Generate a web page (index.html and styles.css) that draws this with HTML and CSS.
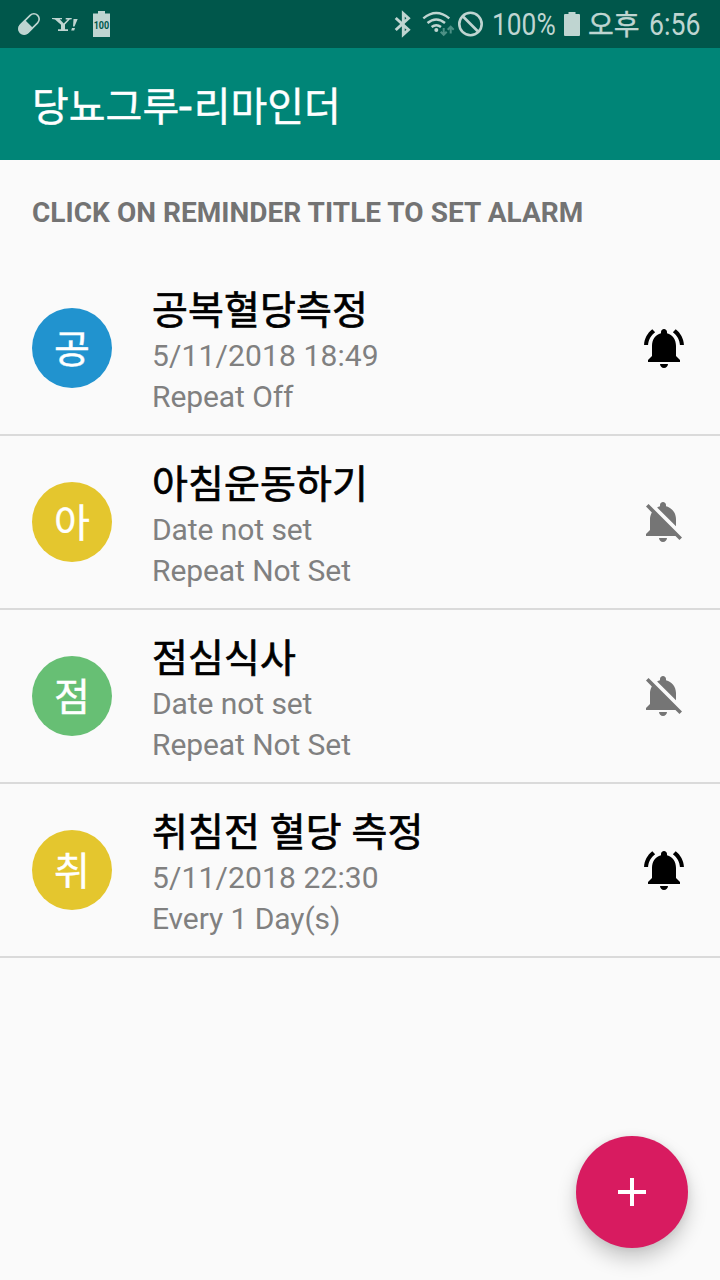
FILE: index.html
```html
<!DOCTYPE html>
<html lang="ko">
<head>
<meta charset="utf-8">
<title>당뇨그루-리마인더</title>
<link rel="stylesheet" href="styles.css">
</head>
<body>
<div class="status">
  <svg class="status-icons" width="180" height="48" viewBox="0 0 180 48">
    <g transform="rotate(-45 29 24)" fill="none" stroke="#bfd5d1" stroke-width="1.6">
      <rect x="16.800" y="18.700" width="24.400" height="10.600" rx="5.300"/>
      <path d="M29 18v12h-6.500a6 6 0 0 1 0-12z" fill="#bfd5d1" stroke="none"/>
    </g>
    <path fill="#bfd5d1" d="M52 18h10v1.200h-2.300l4 4.300 4-4h-2V18h6v1.200l-2 .4-4.700 5v4.700h3V31H58v-1.700h3v-4.500l-6-5.400-3-.3zM73.500 19h4.200l-3.200 7.500h-1.500zM72 28h3l-.8 2.500h-3z"/>
    <path fill="#bfd5d1" d="M93 13.500h5V11h7v2.500h5V37H93z"/>
    <text class="badge-text" x="93.700" y="29" textLength="15.500" lengthAdjust="spacingAndGlyphs">100</text>
  </svg>
  <div class="status-right">
    <svg width="104" height="48" viewBox="384 0 104 48" fill="none" stroke="#bfd5d1">
      <path stroke-width="2.900" d="M395.700 18l12.800 11.800-5.200 4.700V13.500l5.200 4.700-12.800 11.800"/>
      <g stroke-width="2.400"><path d="M423.300 18.400q13-10.600 26 0M427.500 23q8.700-7.200 17.500 0M431.600 27q4.700-3.700 9.400 0"/></g>
      <circle cx="436.300" cy="30" r="2" fill="#bfd5d1" stroke="none"/>
      <path stroke="#4d9186" stroke-width="2" d="M443.700 28v7m-3-3.200l3 3 3-3M450.700 33.500v-7m-3 3.200l3-3 3 3"/>
      <circle cx="470.500" cy="24" r="11.200" stroke-width="2.600"/><path stroke-width="2.600" d="M462.500 16l16 16"/>
    </svg>
    <span class="status-text percent">100%</span>
    <svg class="battery" width="17" height="24" viewBox="0 0 17 24"><path fill="#bfd5d1" d="M1 2h3.500V0h7v2H15q1 0 1 1v20q0 1-1 1H1q-1 0-1-1V3q0-1 1-1z"/></svg>
    <span class="status-text ampm">오후</span>
    <span class="status-text clock">6:56</span>
  </div>
</div>
<header class="appbar"><h1>당뇨그루<span class="dash">-</span>리마인더</h1></header>
<h2 class="hint">CLICK ON REMINDER TITLE TO SET ALARM</h2>
<svg class="defs" width="0" height="0">
  <symbol id="bell" viewBox="0 0 24 24"><path d="M7.580 4.080L6.150 2.650C3.750 4.480 2.170 7.300 2.030 10.500h2c.15-2.650 1.510-4.970 3.550-6.420zM19.970 10.500h2c-.15-3.200-1.730-6.020-4.120-7.850l-1.420 1.430c2.020 1.450 3.390 3.770 3.540 6.420zM18 11c0-3.070-1.640-5.640-4.500-6.320V4c0-.83-.67-1.500-1.500-1.500s-1.500.67-1.500 1.500v.68C7.640 5.360 6 7.920 6 11v5l-2 2v1h16v-1l-2-2zM12 22c1.100 0 2-.9 2-2h-4c0 1.100.9 2 2 2z"/></symbol>
  <symbol id="bell-off" viewBox="0 0 24 24"><path d="M11.500 22c1.100 0 2-.9 2-2h-4c0 1.100.9 2 2 2zM18 10.500c0-3.070-2.130-5.640-5-6.320V3.500c0-.83-.67-1.500-1.500-1.500S10 2.670 10 3.500v.68c-.51.12-.99.32-1.450.56L18 14.180V10.500zm-.27 8.500l2 2L21 19.730 4.270 3 3 4.270l2.920 2.920C5.340 8.160 5 9.290 5 10.500V16l-2 2v1h14.730z"/></symbol>
</svg>
<ul class="list">
  <li class="row">
    <div class="avatar blue">공</div>
    <div class="body"><div class="name">공복혈당측정</div><div class="sub date">5/11/2018 18:49</div><div class="sub">Repeat Off</div></div>
    <svg class="alarm" width="48" height="48"><use href="#bell"/></svg>
  </li>
  <li class="row">
    <div class="avatar yellow">아</div>
    <div class="body"><div class="name">아침운동하기</div><div class="sub">Date not set</div><div class="sub">Repeat Not Set</div></div>
    <svg class="alarm off" width="48" height="48"><use href="#bell-off"/></svg>
  </li>
  <li class="row">
    <div class="avatar green">점</div>
    <div class="body"><div class="name">점심식사</div><div class="sub">Date not set</div><div class="sub">Repeat Not Set</div></div>
    <svg class="alarm off" width="48" height="48"><use href="#bell-off"/></svg>
  </li>
  <li class="row">
    <div class="avatar yellow">취</div>
    <div class="body"><div class="name">취침전 혈당 측정</div><div class="sub date">5/11/2018 22:30</div><div class="sub">Every 1 Day(s)</div></div>
    <svg class="alarm" width="48" height="48"><use href="#bell"/></svg>
  </li>
</ul>
<button class="fab" aria-label="추가"><svg width="28" height="28" viewBox="0 0 28 28"><path fill="#fff" d="M12 0h4v12h12v4H16v12h-4V16H0v-4h12z"/></svg></button>
</body>
</html>
```

FILE: styles.css
```css
* { box-sizing: border-box; }
body {
  margin: 0;
  width: 720px;
  height: 1280px;
  overflow: hidden;
  background: #fafafa;
  font-family: Roboto, "Noto Sans CJK KR", sans-serif;
}
.status {
  height: 48px;
  display: flex;
  justify-content: space-between;
  background: #00574b;
  color: #bfd5d1;
}
.badge-text {
  font: 700 10.5px Roboto, sans-serif;
  fill: #00574b;
}
.status-right {
  display: flex;
  align-items: center;
  width: 336px;
}
.status-text {
  flex: none;
  font-size: 31px;
  line-height: 48px;
  white-space: nowrap;
  transform-origin: 0 50%;
}
.percent { width: 76px; margin-left: 4px; padding-top: 2px; transform: scaleX(.85); }
.battery { flex: none; margin-left: -4px; }
.ampm {
  width: 61px;
  margin-left: 7px;
  padding-top: 3px;
  font-size: 28px;
  -webkit-text-stroke: .4px #bfd5d1;
}
.clock { padding-top: 2px; transform: scaleX(.86); }
.appbar {
  height: 112px;
  padding: 7px 32px 0;
  display: flex;
  align-items: center;
  background: #008577;
  color: #fff;
}
.appbar h1 {
  margin: 0;
  font-size: 40px;
  font-weight: 400;
  line-height: 60px;
  -webkit-text-stroke: .4px #fff;
}
.dash {
  display: inline-block;
  width: 14.500px;
  transform: scaleX(1.15);
  transform-origin: 0 50%;
  -webkit-text-stroke: .8px #fff;
}
.hint {
  margin: 0;
  height: 102px;
  padding: 36px 32px 0;
  font-size: 28px;
  line-height: 33px;
  font-weight: 700;
  letter-spacing: .03px;
  color: #737373;
  white-space: nowrap;
}
.defs { position: absolute; }
.list { margin: 0; padding: 0; list-style: none; }
.row {
  height: 174px;
  padding: 0 32px;
  display: flex;
  align-items: center;
  border-bottom: 2px solid #dadada;
}
.avatar {
  width: 80px;
  height: 80px;
  padding-top: 4px;
  border-radius: 50%;
  display: flex;
  align-items: center;
  justify-content: center;
  font-size: 39px;
  line-height: 76px;
  color: #fff;
  -webkit-text-stroke: .4px #fff;
}
.blue { background: #2193cf; }
.yellow { background: #e4c62e; }
.green { background: #67bf74; }
.body { flex: 1; margin-left: 40px; height: 128px; }
.name {
  height: 51px;
  padding-top: 2px;
  font-size: 39px;
  line-height: 50px;
  font-weight: 400;
  letter-spacing: .1px;
  color: #000;
  white-space: nowrap;
  -webkit-text-stroke: .7px #000;
}
.sub {
  font-size: 30px;
  line-height: 41px;
  letter-spacing: -.08px;
  color: #808080;
  white-space: nowrap;
}
.date { letter-spacing: .12px; }
.alarm { fill: #000; }
.alarm.off { fill: #757575; }
.fab {
  position: absolute;
  left: 576px;
  top: 1136px;
  width: 112px;
  height: 112px;
  padding: 0;
  border: 0;
  border-radius: 50%;
  display: flex;
  align-items: center;
  justify-content: center;
  background: #d81b60;
  box-shadow: 0 11px 20px rgba(0, 0, 0, .2), 0 1px 8px rgba(0, 0, 0, .08);
}
```
